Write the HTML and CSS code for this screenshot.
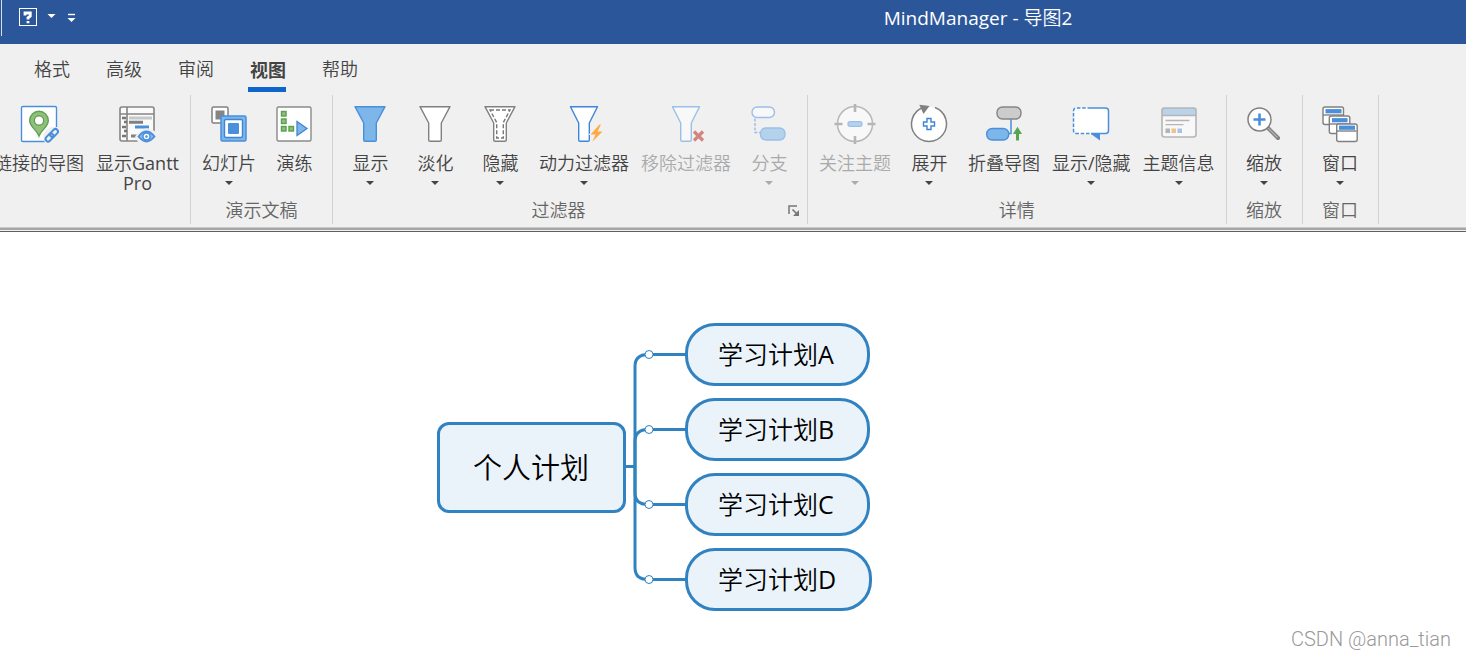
FILE: index.html
```html
<!DOCTYPE html>
<html lang="zh-CN">
<head>
<meta charset="utf-8">
<meta name="viewport" content="width=device-width, initial-scale=1">
<title>MindManager - 导图2</title>
<link rel="stylesheet" href="styles.css">
</head>
<body>
<header class="titlebar">
  <div class="quick">
    <button class="quick-btn" aria-label="帮助选项">
      <svg width="40" height="20" viewBox="0 0 40 20"><rect x="1.5" y="1.5" width="17" height="17" fill="none" stroke="#fff"/><path d="M7 8.500V6H12.300V9L10 10.800V12.500M10 14v2.300" fill="none" stroke="#fff" stroke-width="2.800"/><path d="M29.500 7h8l-4 4z" fill="#fff"/></svg>
    </button>
    <button class="quick-btn" aria-label="自定义快速访问工具栏">
      <svg width="9" height="20" viewBox="0 0 9 20"><path d="M1 7.5h7" stroke="#fff" stroke-width="1.4"/><path d="M.5 11h8l-4 4z" fill="#fff"/></svg>
    </button>
  </div>
  <h1 class="title">MindManager - 导图2</h1>
</header>

<nav class="tabs">
  <a class="tab" href="#format">格式</a>
  <a class="tab" href="#advanced">高级</a>
  <a class="tab" href="#review">审阅</a>
  <a class="tab tab-active" href="#view" aria-current="page">视图</a>
  <a class="tab" href="#help">帮助</a>
</nav>

<section class="ribbon">
  <div class="group group-first">
    <div class="tools">
      <button class="tool">
        <svg class="icon" viewBox="0 0 44 44"><rect x="4.5" y="4.5" width="35" height="35" rx="1.5" fill="#fff" stroke="#4a8fdc" stroke-width="1.4"/><path d="M22 34C20 28 12.7 25 12.7 18.5a9.3 9.3 0 0 1 18.6 0C31.300 25 24 28 22 34z" fill="#93bf7c" stroke="#5da352" stroke-width="1.4"/><circle cx="22" cy="18.500" r="4.700" fill="#fff" stroke="#5da352" stroke-width="1.400"/><path d="M26 32L33 25h9v17H28z" fill="#f0f0f0"/><g fill="none" stroke="#4a8fdc" stroke-width="2"><rect x="-4.500" y="-2.500" width="9" height="5" rx="2.500" transform="translate(37 31) rotate(-45)"/><rect x="-4.500" y="-2.500" width="9" height="5" rx="2.500" transform="translate(32.500 35.500) rotate(-45)"/></g></svg>
        <span class="label">链接的导图</span>
      </button>
      <button class="tool">
        <svg class="icon" viewBox="0 0 44 44"><rect x="5" y="5" width="34" height="34" rx="2" fill="#fafafa" stroke="#858585" stroke-width="1.600"/><path d="M5 12h34M12 5v34" stroke="#858585" stroke-width="1.600"/><path d="M7 16h4M9 20h3M7 25h4M9 29h3M7 34h4" stroke="#777" stroke-width="2.600"/><path d="M14 16h23" stroke="#c8c8c8" stroke-width="3"/><path d="M14 20.300h14M16 34h6" stroke="#808080" stroke-width="3"/><path d="M20 25h14" stroke="#4a8fdc" stroke-width="3"/><path d="M20 34.500q5.500-8 11.500-8 5 0 10 4V42H24z" fill="#f0f0f0"/><path d="M23.500 34.500q8-10 16 0q-8 10-16 0z" fill="#8dbbe9" stroke="#4a8fdc" stroke-width="1.800"/><circle cx="31.500" cy="34.500" r="3.600" fill="#fff" stroke="#4a8fdc" stroke-width="1.600"/><circle cx="31.500" cy="34.500" r="1.300" fill="#4a8fdc"/></svg>
        <span class="label">显示Gantt<br>Pro</span>
      </button>
    </div>
  </div>

  <div class="group">
    <div class="tools">
      <button class="tool">
        <svg class="icon" viewBox="0 0 44 44"><rect x="5" y="5" width="16" height="16" rx="1.500" fill="#fff" stroke="#808080" stroke-width="1.500"/><rect x="8.500" y="8.500" width="9" height="9" fill="#858585"/><rect x="14" y="14" width="25" height="25" rx="1.500" fill="#7db6e8" stroke="#4a8fdc" stroke-width="1.500"/><rect x="17.500" y="17.500" width="18" height="18" rx="1.500" fill="#fff" stroke="#3d85d8" stroke-width="1.400"/><rect x="21" y="21" width="11" height="11" rx="1" fill="#4a8fdc"/></svg>
        <span class="label">幻灯片</span><svg class="arrow" viewBox="0 0 8 4"><path d="M0 0h8L4 4z"/></svg>
      </button>
      <button class="tool">
        <svg class="icon" viewBox="0 0 44 44"><rect x="5" y="5" width="34" height="34" rx="1.500" fill="#fff" stroke="#8a8a8a" stroke-width="1.400"/><g fill="#93bf7c" stroke="#58a04c" stroke-width="1.400"><rect x="9.500" y="9.500" width="4.500" height="4.500"/><rect x="9.500" y="17" width="4.500" height="4.500"/><rect x="9.500" y="24.500" width="4.500" height="4.500"/><rect x="17" y="24.500" width="4.500" height="4.500"/></g><path d="M25 19.500v14L35 26.500z" fill="#7db6e8" stroke="#3d85d8" stroke-width="1.300"/></svg>
        <span class="label">演练</span>
      </button>
    </div>
    <h2 class="group-name">演示文稿</h2>
  </div>

  <div class="group">
    <div class="tools">
      <button class="tool">
        <svg class="icon" viewBox="0 0 44 44"><path d="M7 4.700H37L28.300 21V38q0 1.300-1.300 1.300H17q-1.300 0-1.300-1.300V21z" fill="#7db6e8" stroke="#4a8fdc" stroke-width="1.400" stroke-linejoin="round"/></svg>
        <span class="label">显示</span><svg class="arrow" viewBox="0 0 8 4"><path d="M0 0h8L4 4z"/></svg>
      </button>
      <button class="tool">
        <svg class="icon" viewBox="0 0 44 44"><path d="M7 4.700H37L28.300 21V38q0 1.300-1.300 1.300H17q-1.300 0-1.300-1.300V21z" fill="#fff" stroke="#808080" stroke-width="1.400" stroke-linejoin="round"/></svg>
        <span class="label">淡化</span><svg class="arrow" viewBox="0 0 8 4"><path d="M0 0h8L4 4z"/></svg>
      </button>
      <button class="tool">
        <svg class="icon" viewBox="0 0 44 44"><path d="M7 4.700H37L28.300 21V38q0 1.300-1.300 1.300H17q-1.300 0-1.300-1.300V21z" fill="#fff" stroke="#808080" stroke-width="1.400" stroke-linejoin="round"/><path d="M12 8H32L25.300 20.500V36H18.700V20.500z" fill="none" stroke="#777" stroke-width="1.400" stroke-dasharray="4 2"/></svg>
        <span class="label">隐藏</span><svg class="arrow" viewBox="0 0 8 4"><path d="M0 0h8L4 4z"/></svg>
      </button>
      <button class="tool">
        <svg class="icon" viewBox="0 0 44 44"><path d="M8.500 4.700H35.500L27.300 21V38q0 1.300-1.300 1.300H18q-1.300 0-1.300-1.300V21z" fill="#fff" stroke="#3d85d8" stroke-width="1.400" stroke-linejoin="round"/><path d="M36 21L26.500 33h5.500L29 42L42 29h-5L40.500 21z" fill="#f0f0f0"/><path d="M37.500 22.500L28.500 32.500h5L30.500 39.500L40.500 29.500h-5L39 22.500z" fill="#ffaa42"/></svg>
        <span class="label">动力过滤器</span><svg class="arrow" viewBox="0 0 8 4"><path d="M0 0h8L4 4z"/></svg>
      </button>
      <button class="tool" disabled>
        <svg class="icon" viewBox="0 0 44 44"><path d="M8.500 4.700H35.500L27.300 21V38q0 1.300-1.300 1.300H18q-1.300 0-1.300-1.300V21z" fill="#f8f8f8" stroke="#9abfe8" stroke-width="1.400" stroke-linejoin="round"/><path d="M30 29.500l9 9M39 29.500l-9 9" stroke="#d18480" stroke-width="3.200"/></svg>
        <span class="label">移除过滤器</span>
      </button>
      <button class="tool" disabled>
        <svg class="icon" viewBox="0 0 44 44"><rect x="5" y="5" width="22.500" height="10.500" rx="5.200" fill="#f8f8f8" stroke="#9abfe8" stroke-width="1.400"/><path d="M8 16.500V30.500H13" fill="none" stroke="#9abfe8" stroke-width="1.500" stroke-dasharray="3 1.500"/><rect x="13.500" y="26" width="24.500" height="12" rx="5.500" fill="#b5d2ed" stroke="#9abfe8" stroke-width="1.400"/></svg>
        <span class="label">分支</span><svg class="arrow" viewBox="0 0 8 4"><path d="M0 0h8L4 4z"/></svg>
      </button>
    </div>
    <div class="group-foot">
      <h2 class="group-name">过滤器</h2>
      <button class="launcher" aria-label="过滤器设置"><svg width="11" height="11" viewBox="0 0 11 11"><path d="M1 9V1H9" fill="none" stroke="#777" stroke-width="1.500"/><path d="M4.500 4.500l4 4" stroke="#777" stroke-width="1.700"/><path d="M11 5v6H5z" fill="#777"/></svg></button>
    </div>
  </div>

  <div class="group">
    <div class="tools">
      <button class="tool" disabled>
        <svg class="icon" viewBox="0 0 44 44"><circle cx="22" cy="22" r="17.500" fill="#f8f8f8" stroke="#b8b8b8" stroke-width="1.500"/><path d="M22 2v8M22 34v8M1.500 22h8M34.500 22h8" stroke="#b5b5b5" stroke-width="2.600"/><rect x="15" y="19.700" width="14" height="4.600" rx="2" fill="#b5d2ed" stroke="#9abfe8" stroke-width="1.200"/></svg>
        <span class="label">关注主题</span><svg class="arrow" viewBox="0 0 8 4"><path d="M0 0h8L4 4z"/></svg>
      </button>
      <button class="tool">
        <svg class="icon" viewBox="0 0 44 44"><circle cx="22" cy="22" r="17" fill="#fff"/><path d="M28 5.500A17.500 17.500 0 1 1 16 5.500" fill="none" stroke="#808080" stroke-width="1.500"/><path d="M12.300 2.700L22.500 4L16.500 12z" fill="#808080"/><path d="M20 16.500h4v3.500h3.500v4H24v3.500h-4V24h-3.500v-4H20z" fill="#fff" stroke="#3d85d8" stroke-width="1.400"/></svg>
        <span class="label">展开</span><svg class="arrow" viewBox="0 0 8 4"><path d="M0 0h8L4 4z"/></svg>
      </button>
      <button class="tool">
        <svg class="icon" viewBox="0 0 44 44"><path d="M29 17V31.500H26" fill="none" stroke="#4a8fdc" stroke-width="1.500"/><rect x="15" y="5" width="24" height="12" rx="5.500" fill="#ccc" stroke="#858585" stroke-width="1.400"/><rect x="4.700" y="26.500" width="22" height="11.500" rx="5.500" fill="#7db6e8" stroke="#4a8fdc" stroke-width="1.400"/><path d="M35.500 24.700L40 32h-3v6.500h-3V32h-3z" fill="#58a550"/></svg>
        <span class="label">折叠导图</span>
      </button>
      <button class="tool">
        <svg class="icon" viewBox="0 0 44 44"><rect x="5" y="6" width="34" height="26" rx="3" fill="#fff"/><path d="M22 6H36.500q3 0 3 3V28.500q0 3-3 3H22" fill="none" stroke="#4a8fdc" stroke-width="1.500"/><path d="M22 6H7.500q-3 0-3 3V28.500q0 3 3 3H22" fill="none" stroke="#4a8fdc" stroke-width="1.500" stroke-dasharray="3.500 1.800"/><path d="M22 32h9v6.500z" fill="#4a8fdc"/></svg>
        <span class="label">显示/隐藏</span><svg class="arrow" viewBox="0 0 8 4"><path d="M0 0h8L4 4z"/></svg>
      </button>
      <button class="tool">
        <svg class="icon" viewBox="0 0 44 44"><rect x="5" y="6" width="34" height="29" rx="2.500" fill="#f8f8f8"/><path d="M5 13.500V8.500q0-2.500 2.500-2.500H36.500q2.500 0 2.500 2.500v5z" fill="#b9d3ea"/><rect x="5" y="6" width="34" height="29" rx="2.500" fill="none" stroke="#b5b5b5" stroke-width="1.600"/><path d="M5 13.500h34M8.500 18.500h24M8.500 22.700h18" stroke="#b5b5b5" stroke-width="1.300"/><path d="M8.500 26.500h4.500v4.500H8.500z" fill="#b3b3b3"/><path d="M14.500 26.500h4.500v4.500h-4.500z" fill="#f2c28e"/><path d="M20.500 26.500h4.500v4.500h-4.500z" fill="#a6c3e6"/></svg>
        <span class="label">主题信息</span><svg class="arrow" viewBox="0 0 8 4"><path d="M0 0h8L4 4z"/></svg>
      </button>
    </div>
    <h2 class="group-name">详情</h2>
  </div>

  <div class="group">
    <div class="tools">
      <button class="tool">
        <svg class="icon" viewBox="0 0 44 44"><path d="M26 26L36 36" stroke="#808080" stroke-width="4" stroke-linecap="round"/><path d="M26 26L35.500 35.500" stroke="#b0b0b0" stroke-width="1.300"/><circle cx="17.500" cy="17.500" r="11.500" fill="#fff" stroke="#808080" stroke-width="1.500"/><path d="M17.500 11.500v12M11.500 17.500h12" stroke="#4a8fdc" stroke-width="2.600"/></svg>
        <span class="label">缩放</span><svg class="arrow" viewBox="0 0 8 4"><path d="M0 0h8L4 4z"/></svg>
      </button>
    </div>
    <h2 class="group-name">缩放</h2>
  </div>

  <div class="group">
    <div class="tools">
      <button class="tool">
        <svg class="icon" viewBox="0 0 44 44"><g fill="#fff" stroke="#808080" stroke-width="1.400"><rect x="5" y="5" width="20.500" height="17.500" rx="2"/><path d="M5 13h20"/></g><path d="M7.500 9.200h16" stroke="#4a8fdc" stroke-width="4.200"/><g fill="#fff" stroke="#808080" stroke-width="1.400"><rect x="11.300" y="14" width="20.500" height="17.500" rx="2"/><path d="M11.300 22h20"/></g><path d="M14 18.200h15.500" stroke="#4a8fdc" stroke-width="4.200"/><g fill="#fff" stroke="#808080" stroke-width="1.400"><rect x="18.700" y="22" width="20.500" height="17.500" rx="2"/><path d="M18.700 29h20"/></g><path d="M21 25.700h16" stroke="#4a8fdc" stroke-width="4.200"/></svg>
        <span class="label">窗口</span><svg class="arrow" viewBox="0 0 8 4"><path d="M0 0h8L4 4z"/></svg>
      </button>
    </div>
    <h2 class="group-name">窗口</h2>
  </div>
</section>

<main class="canvas">
  <div class="map">
    <div class="root">个人计划</div>
    <svg class="links" width="59" height="288" viewBox="0 0 59 288">
      <g fill="none" stroke="#3182c0" stroke-width="3"><path d="M0 143.500H9"/><path d="M59 31.500H22Q9 31.500 9 43.500V244.500Q9 256.500 22 256.500H59"/><path d="M59 106.500H22Q9 106.500 9 118.500V169.500Q9 181.500 22 181.500H59"/></g>
      <g fill="#fff" stroke="#3182c0"><circle cx="23" cy="31.500" r="4"/><circle cx="23" cy="106.500" r="4"/><circle cx="23" cy="181.500" r="4"/><circle cx="23" cy="256.500" r="4"/></g>
    </svg>
    <ul class="topics">
      <li class="topic">学习计划A</li>
      <li class="topic">学习计划B</li>
      <li class="topic">学习计划C</li>
      <li class="topic">学习计划D</li>
    </ul>
  </div>
  <p class="watermark">CSDN @anna_tian</p>
</main>
</body>
</html>
```

FILE: styles.css
```css
* {
  box-sizing: border-box;
}

body {
  margin: 0;
  min-height: 100vh;
  display: flex;
  flex-direction: column;
  overflow-x: hidden;
  background: #fff;
  color: #444;
  font-family: "Open Sans", "Noto Sans CJK SC DemiLight", "Noto Sans CJK SC", sans-serif;
  font-size: 18px;
  line-height: 20px;
}

button {
  margin: 0;
  padding: 0;
  border: 0;
  background: none;
  color: inherit;
  font: inherit;
}

h1,
h2,
p,
ul {
  margin: 0;
  padding: 0;
  font-size: inherit;
  font-weight: 400;
  list-style: none;
}

svg {
  display: block;
}

.titlebar {
  display: flex;
  height: 44px;
  background: #2b579a;
  color: #fff;
}

.quick {
  flex: 0 0 490px;
  display: flex;
  align-items: flex-start;
  gap: 9px;
  padding-left: 18px;
}

.quick::before {
  content: "";
  width: 1px;
  height: 36px;
  margin: 0 -1px 0 -17px;
  background: #d5deeb;
}

.quick-btn {
  margin-top: 7px;
}

.quick-btn:first-child {
  margin-left: 8px;
}

.title {
  flex: 1;
  padding-top: 8px;
  font-size: 19px;
  text-align: center;
}

.tabs {
  display: flex;
  gap: 34px;
  padding-left: 32px;
  height: 51px;
  background: #f0f0f0;
}

.tab {
  height: 48px;
  padding: 15px 0 0 2px;
  border-bottom: 5px solid transparent;
  color: #444;
  text-decoration: none;
}

.tab-active {
  border-color: #0f65cc;
  font-family: "Noto Sans CJK SC", sans-serif;
  font-weight: 700;
}

.ribbon {
  display: flex;
  padding-bottom: 7px;
  background: #f0f0f0;
  border-bottom: 1px solid #606060;
  box-shadow: inset 0 -1px #f0f0f0, inset 0 -3px #a6a6a6, inset 0 -4px #c8c8c8;
}

.group {
  flex: none;
  display: flex;
  flex-direction: column;
  height: 129px;
  padding: 0 5px;
  border-right: 1px solid #d2d2d2;
}

.group-first {
  margin-left: -17px;
}

.tools {
  display: flex;
  height: 105px;
}

.tool {
  display: flex;
  flex-direction: column;
  align-items: center;
  min-width: 65px;
  padding: 7px 6px 0;
}

.tool:disabled {
  color: #aaa;
}

.icon {
  width: 44px;
  height: 44px;
  margin-bottom: 7px;
}

.label {
  white-space: nowrap;
}

.arrow {
  width: 8px;
  height: 4px;
  margin-top: 8px;
  fill: currentColor;
}

.group-foot {
  display: flex;
  align-items: center;
  padding-right: 3px;
}

.group-name {
  flex: 1;
  color: #666;
  text-align: center;
}

.launcher {
  padding-left: 9px;
}

.canvas {
  position: relative;
  flex: 1;
  padding: 91px 0 44px 437px;
  color: #000;
}

.map {
  display: flex;
  align-items: center;
}

.root,
.topic {
  border: 3px solid #3182c0;
  background: #ebf3fa;
  white-space: nowrap;
}

.root {
  padding: 24px 34px 24px 33px;
  border-radius: 12px;
  font-size: 29px;
  line-height: 37px;
}

.links {
  flex: none;
}

.topics {
  display: flex;
  flex-direction: column;
  align-items: flex-start;
  gap: 12px;
}

.topic {
  padding: 12px 33px 12px 30px;
  border-radius: 30px;
  font-size: 25px;
  line-height: 33px;
}

.watermark {
  position: absolute;
  right: 15px;
  bottom: 9px;
  color: #999;
  font-family: Roboto, sans-serif;
  font-size: 20px;
  font-weight: 300;
}
```
